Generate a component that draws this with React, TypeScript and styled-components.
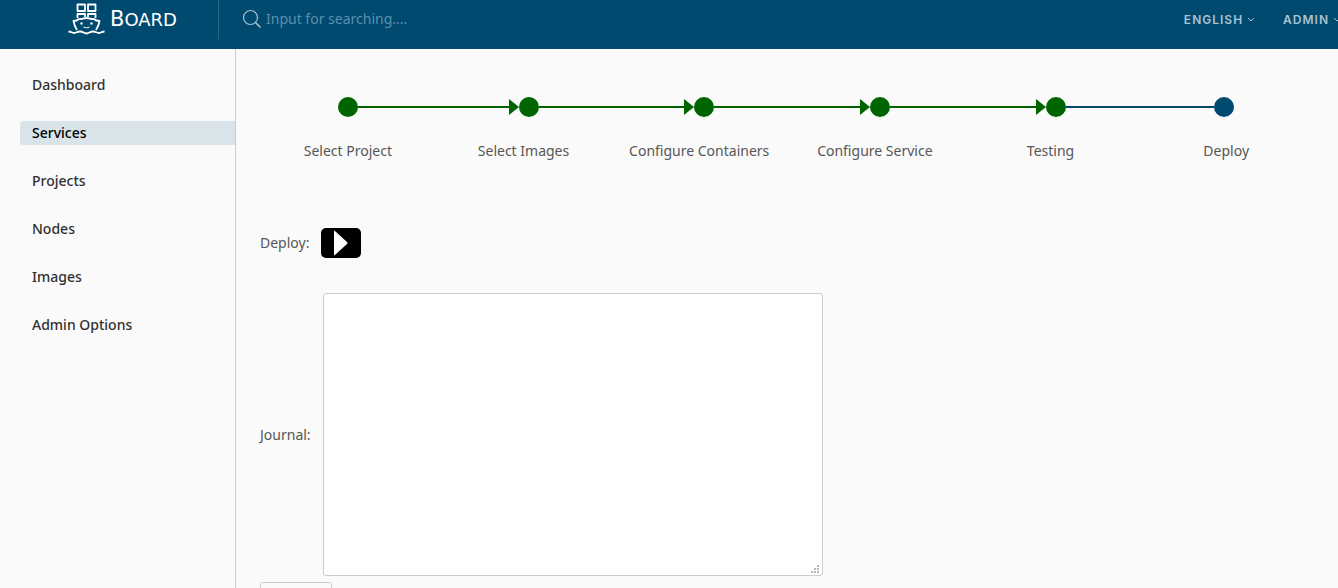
import React from "react";
import styled, { createGlobalStyle } from "styled-components";

const colors = {
  header: "#004a70",
  done: "#006400",
  page: "#fafafa",
  line: "#cccccc",
  text: "#565656",
};

const GlobalStyle = createGlobalStyle`
  * { box-sizing: border-box; }
  body {
    margin: 0;
    background: ${colors.page};
    color: ${colors.text};
    font-family: "Noto Sans", sans-serif;
    font-size: 14px;
    line-height: 24px;
  }
`;

const Page = styled.div`
  display: flex;
  flex-direction: column;
  height: 100vh;
  overflow: hidden;
`;

const Header = styled.header`
  display: flex;
  flex: none;
  height: 49px;
  overflow: hidden;
  background: ${colors.header};
`;

const Brand = styled.a`
  display: flex;
  align-items: center;
  gap: 5px;
  height: 39px;
  width: 219px;
  padding: 0 0 2px 68px;
  border-right: 1px solid #26658a;
  color: #ffffff;
  text-decoration: none;
`;

const BrandName = styled.div`
  padding-top: 2px;
  font-family: "DejaVu Sans", sans-serif;
  font-size: 18px;
  line-height: 24px;

  &::first-letter { font-size: 21px; }
`;

const Search = styled.label`
  display: flex;
  flex: 1;
  align-items: center;
  gap: 4px;
  height: 39px;
  padding: 0 0 2px 23px;
  color: #a9c3d1;
`;

const SearchInput = styled.input`
  flex: 1;
  padding: 0;
  border: 0;
  outline: 0;
  background: transparent;
  color: #ffffff;
  font: inherit;

  &::placeholder { color: #5b8fae; opacity: 1; }
`;

const HeaderActions = styled.nav`
  display: flex;
  align-items: center;
  gap: 28px;
  height: 39px;
  margin-right: -3px;
`;

const HeaderButton = styled.button`
  display: flex;
  align-items: center;
  gap: 4px;
  padding: 0;
  border: 0;
  background: transparent;
  color: #a9c3d1;
  font: 600 12px/24px "Inter", sans-serif;
  letter-spacing: 1px;
`;

const Body = styled.div`
  display: flex;
  flex: 1;
  min-height: 0;
`;

const Sidebar = styled.nav`
  display: flex;
  flex: none;
  flex-direction: column;
  gap: 24px;
  width: 236px;
  padding: 24px 0 0 20px;
  border-right: 1px solid ${colors.line};
`;

const NavLink = styled.a<{ $active?: boolean }>`
  padding-left: 12px;
  border-radius: 3px 0 0 3px;
  background: ${(p) => (p.$active ? "#d9e4ea" : "transparent")};
  color: ${(p) => (p.$active ? "#000000" : "#313131")};
  font-weight: 500;
  text-decoration: none;
`;

const Main = styled.main`
  flex: 1;
  min-width: 0;
  padding: 48px 24px 0;
`;

const Steps = styled.ol`
  display: flex;
  margin: 0;
  padding: 0;
  list-style: none;
`;

const Step = styled.li`
  flex: 1;
  text-align: center;
`;

const Track = styled.div<{ $last: boolean }>`
  display: flex;
  align-items: center;
  height: 20px;
  margin-bottom: 22px;
  padding-right: ${(p) => (p.$last ? "4px" : "0")};
`;

const Segment = styled.span<{ $color: string }>`
  flex: 1;
  height: 2px;
  background: ${(p) => p.$color};
`;

const Arrow = styled.span`
  border: solid transparent;
  border-width: 8px 0 8px 10px;
  border-left-color: ${colors.done};
`;

const Dot = styled.span<{ $color: string }>`
  width: 20px;
  height: 20px;
  border-radius: 50%;
  background: ${(p) => p.$color};
`;

const DeployRow = styled.div`
  display: flex;
  align-items: center;
  gap: 12px;
  margin-top: 65px;
`;

const PlayButton = styled.button`
  display: flex;
  align-items: center;
  justify-content: center;
  width: 40px;
  height: 30px;
  padding: 0;
  border: 0;
  border-radius: 5px;
  background: #000000;
`;

const JournalRow = styled.div`
  display: flex;
  align-items: center;
  gap: 12px;
  margin-top: 35px;
`;

const JournalBox = styled.div`
  position: relative;
  display: flex;
  width: 500px;
`;

const Journal = styled.textarea`
  width: 100%;
  height: 283px;
  padding: 4px 8px;
  border: 1px solid ${colors.line};
  border-radius: 3px;
  background: #ffffff;
  color: ${colors.text};
  font: inherit;
  resize: none;
`;

const Grip = styled.svg`
  position: absolute;
  right: 3px;
  bottom: 2px;
  pointer-events: none;
`;

const FooterButton = styled.button`
  display: block;
  width: 72px;
  height: 36px;
  margin-top: 6px;
  border: 1px solid ${colors.line};
  border-radius: 3px;
  background: transparent;
`;

const ShipLogo = () => (
  <svg width="37" height="32" viewBox="0 0 37 32" fill="none" stroke="currentColor" strokeWidth="1.8" strokeLinejoin="round" aria-hidden="true">
    <path d="M9.500 1.500h7.500v6.500H9.500zM20 1.500h7.500v6.500H20zM9.500 15v-4h7.500v3M20 14v-3h7.500v4" />
    <path d="M9 27C7 24 6 21 5.500 18c2.500 0 4-.5 5.500-2 2 .5 5-1 7.500-1s5.500 1.500 7.500 1c1.500 1.500 3 2 5.500 2-.5 3-1.500 6-3.500 9" />
    <path d="M0.500 28.500c3 0 3 1.500 5.500 1.500s3-1.500 6-1.500 4 2 6.500 2 3.500-2 6.500-2 3.500 1.500 6 1.500 2.500-1.500 5.500-1.500" />
    <path d="M15.500 24c2 1 4 1 6 0" strokeWidth="1" />
    <circle cx="13.500" cy="20.500" r="1.200" fill="currentColor" stroke="none" />
    <circle cx="23.500" cy="20.500" r="1.200" fill="currentColor" stroke="none" />
  </svg>
);

const SearchIcon = () => (
  <svg width="20" height="20" viewBox="0 0 20 20" fill="none" stroke="currentColor" strokeWidth="1.2" aria-hidden="true">
    <circle cx="8.500" cy="8.500" r="7" />
    <path d="m13.500 13.500 5 5" strokeWidth="1.6" />
  </svg>
);

const Caret = () => (
  <svg width="8" height="8" viewBox="0 0 8 8" fill="none" stroke="currentColor" aria-hidden="true">
    <path d="m1 2 3 3 3-3" />
  </svg>
);

const navItems = ["Dashboard", "Services", "Projects", "Nodes", "Images", "Admin Options"];
const steps = ["Select Project", "Select Images", "Configure Containers", "Configure Service", "Testing", "Deploy"];

export default function App() {
  const last = steps.length - 1;
  return (
    <Page>
      <GlobalStyle />
      <Header>
        <Brand href="#">
          <ShipLogo />
          <BrandName>BOARD</BrandName>
        </Brand>
        <Search>
          <SearchIcon />
          <SearchInput type="text" aria-label="Search" placeholder="Input for searching...." />
        </Search>
        <HeaderActions>
          <HeaderButton type="button">ENGLISH<Caret /></HeaderButton>
          <HeaderButton type="button">ADMIN<Caret /></HeaderButton>
        </HeaderActions>
      </Header>
      <Body>
        <Sidebar>
          {navItems.map((item) => (
            <NavLink key={item} href="#" $active={item === "Services"}>{item}</NavLink>
          ))}
        </Sidebar>
        <Main>
          <Steps>
            {steps.map((label, i) => (
              <Step key={label}>
                <Track $last={i === last}>
                  <Segment $color={i === 0 ? "transparent" : i === last ? colors.header : colors.done} />
                  {i > 0 && i < last && <Arrow />}
                  <Dot $color={i === last ? colors.header : colors.done} />
                  <Segment $color={i === last ? "transparent" : i === last - 1 ? colors.header : colors.done} />
                </Track>
                {label}
              </Step>
            ))}
          </Steps>
          <DeployRow>
            <span>Deploy:</span>
            <PlayButton type="button" aria-label="Deploy">
              <svg width="14" height="26" viewBox="0 0 14 26" fill="#ffffff" aria-hidden="true">
                <path d="M0 2q0-2 1.500-.500L13 12q1 1 0 2L1.500 24.500Q0 26 0 24z" />
              </svg>
            </PlayButton>
          </DeployRow>
          <JournalRow>
            <label htmlFor="journal">Journal:</label>
            <JournalBox>
              <Journal id="journal" />
              <Grip width="9" height="9" fill="#b8b8b8" aria-hidden="true">
                <path d="M6 0h2v2H6zM3 3h2v2H3zM6 3h2v2H6zM0 6h2v2H0zM3 6h2v2H3zM6 6h2v2H6z" />
              </Grip>
            </JournalBox>
          </JournalRow>
          <FooterButton type="button" aria-label="Back" />
        </Main>
      </Body>
    </Page>
  );
}
